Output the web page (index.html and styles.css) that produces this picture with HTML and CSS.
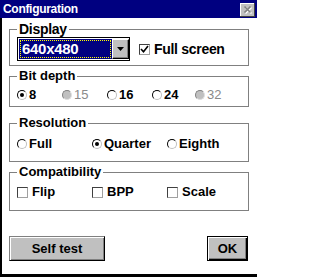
FILE: index.html
```html
<!DOCTYPE html>
<html>
<head>
<meta charset="utf-8">
<link rel="stylesheet" href="styles.css">
</head>
<body>
<div class="window">
  <div class="titlebar">
    <span class="title">Configuration</span>
    <span class="close">
      <svg width="15" height="14" viewBox="0 0 15 14">
        <path d="M4.5 3.5 L10.5 9.5 M10.5 3.5 L4.5 9.5" stroke="#fff" stroke-width="1.6" transform="translate(1 1)"/>
        <path d="M4.5 3.5 L10.5 9.5 M10.5 3.5 L4.5 9.5" stroke="#808080" stroke-width="1.6"/>
      </svg>
    </span>
  </div>
  <div class="client">
    <fieldset class="group g-display">
      <legend class="legend big">Display</legend>
      <div class="display-row">
        <div class="combo">
          <div class="combo-value"><span class="focus">640x480</span></div>
          <div class="combo-btn">
            <svg width="7" height="4" viewBox="0 0 7 4"><path d="M0 0 H7 L3.5 4 Z" fill="#000"/></svg>
          </div>
        </div>
        <label class="opt check-opt big-text">
          <span class="box">
            <svg width="9" height="9" viewBox="0 0 9 9"><path d="M1 4 L3.5 6.8 L8 1" stroke="#000" stroke-width="1.6" fill="none"/></svg>
          </span>Full screen
        </label>
      </div>
    </fieldset>

    <fieldset class="group g-bits">
      <legend class="legend">Bit depth</legend>
      <div class="opts five">
        <span class="opt"><span class="radio on"><span class="dot"></span></span>8</span>
        <span class="opt dis"><span class="radio"></span>15</span>
        <span class="opt"><span class="radio"></span>16</span>
        <span class="opt"><span class="radio"></span>24</span>
        <span class="opt dis"><span class="radio"></span>32</span>
      </div>
    </fieldset>

    <fieldset class="group g-res">
      <legend class="legend">Resolution</legend>
      <div class="opts three">
        <span class="opt"><span class="radio"></span>Full</span>
        <span class="opt"><span class="radio on"><span class="dot"></span></span>Quarter</span>
        <span class="opt"><span class="radio"></span>Eighth</span>
      </div>
    </fieldset>

    <fieldset class="group g-compat">
      <legend class="legend">Compatibility</legend>
      <div class="opts three">
        <span class="opt check-opt"><span class="box"></span>Flip</span>
        <span class="opt check-opt"><span class="box"></span>BPP</span>
        <span class="opt check-opt"><span class="box"></span>Scale</span>
      </div>
    </fieldset>

    <div class="buttons">
      <button class="btn self">Self test</button>
      <button class="btn ok">OK</button>
    </div>
  </div>
</div>
</body>
</html>
```

FILE: styles.css
```css
html, body {
  margin: 0;
  padding: 0;
  background: #fff;
}

.window {
  width: 257px;
  height: 277px;
  display: flex;
  flex-direction: column;
  font-family: "Liberation Sans", Arial, sans-serif;
  background: #fff;
  color: #000;
  overflow: hidden;
}

.titlebar {
  flex: none;
  height: 18px;
  background: #000080;
  color: #fff;
  display: flex;
  align-items: center;
  justify-content: space-between;
  padding: 0 2px 0 3px;
}

.title {
  font-weight: bold;
  font-size: 12px;
  letter-spacing: -0.3px;
  line-height: 18px;
}

.close {
  width: 15px;
  height: 14px;
  box-sizing: border-box;
  background: #c0c0c0;
  display: flex;
  box-shadow: inset -1px -1px #404040, inset 1px 1px #fff;
  margin-top: 1px;
}

.client {
  flex: 1;
  border-left: 2px solid #000;
  border-bottom: 3px solid #000;
  padding: 0 8px 0 7px;
  display: flex;
  flex-direction: column;
}

.group {
  margin: 0;
  border: 1px solid #808080;
  min-width: 0;
  padding-left: 7px;
  padding-right: 0;
}

.legend {
  padding: 0 2px;
  font-size: 13px;
  font-weight: bold;
  line-height: 14px;
}

.legend.big {
  font-size: 14px;
  letter-spacing: -0.3px;
}

.g-display { margin-top: 4px; padding-top: 1px; padding-bottom: 4px; }
.g-bits { margin-top: 3px; padding-top: 4px; padding-bottom: 3px; }
.g-res { margin-top: 9px; padding-top: 6px; padding-bottom: 9px; }
.g-compat { margin-top: 3px; padding-top: 5px; padding-bottom: 10px; }

.display-row {
  display: flex;
  align-items: center;
  height: 24px;
  gap: 9px;
}

.combo {
  width: 113px;
  height: 24px;
  box-sizing: border-box;
  border: 1px solid #000;
  padding: 1px 0 1px 1px;
  display: flex;
  background: #fff;
}

.combo-value {
  flex: 1;
  background: #000080;
  display: flex;
  padding: 1px;
}

.focus {
  flex: 1;
  border: 1px dotted #ffff00;
  color: #fff;
  font-size: 15px;
  font-weight: bold;
  letter-spacing: -0.3px;
  line-height: 16px;
  padding-left: 1px;
}

.combo-btn {
  width: 17px;
  box-sizing: border-box;
  background: #c0c0c0;
  border: 1px solid;
  border-color: #fff #000 #000 #fff;
  box-shadow: inset -1px -1px #808080;
  display: flex;
  align-items: center;
  justify-content: center;
}

.opts {
  display: grid;
  height: 16px;
  align-items: center;
}

.opts.five { grid-template-columns: 45px 45px 45px 43px 45px; }
.opts.three { grid-template-columns: 75px 75px 75px; }

.opt {
  display: flex;
  align-items: center;
  gap: 2px;
  font-size: 13px;
  font-weight: bold;
  line-height: 16px;
  white-space: nowrap;
}

.opt.dis {
  color: #8a8a8a;
  font-weight: normal;
}

.check-opt { gap: 4px; }

.big-text {
  font-size: 14px;
  letter-spacing: -0.3px;
}

.radio {
  width: 10px;
  height: 10px;
  box-sizing: border-box;
  border-radius: 50%;
  border: 1px solid;
  border-color: #000 #c0c0c0 #c0c0c0 #000;
  background: #fff;
  display: flex;
  align-items: center;
  justify-content: center;
  flex: none;
}

.dis .radio {
  background: #c0c0c0;
  border-color: #808080 #e0e0e0 #e0e0e0 #808080;
}

.dot {
  width: 4px;
  height: 4px;
  border-radius: 50%;
  background: #000;
}

.box {
  width: 11px;
  height: 11px;
  box-sizing: border-box;
  border: 1px solid;
  border-color: #404040 #a0a0a0 #a0a0a0 #404040;
  background: #fff;
  display: flex;
  align-items: center;
  justify-content: center;
  flex: none;
}

.buttons {
  margin-top: 25px;
  display: flex;
  justify-content: space-between;
  padding-right: 1px;
}

.btn {
  height: 25px;
  background: #c0c0c0;
  font-family: "Liberation Sans", Arial, sans-serif;
  font-size: 13px;
  font-weight: bold;
  color: #000;
  padding: 0;
  margin: 0;
}

.self {
  width: 96px;
  border: 1px solid;
  border-color: #808080 #000 #000 #808080;
  box-shadow: inset 1px 1px #fff, inset -1px -1px #808080;
}

.ok {
  width: 41px;
  border: 1px solid #000;
  box-shadow: inset 1px 1px #fff, inset -1px -1px #000, inset -2px -2px #808080;
}
```
